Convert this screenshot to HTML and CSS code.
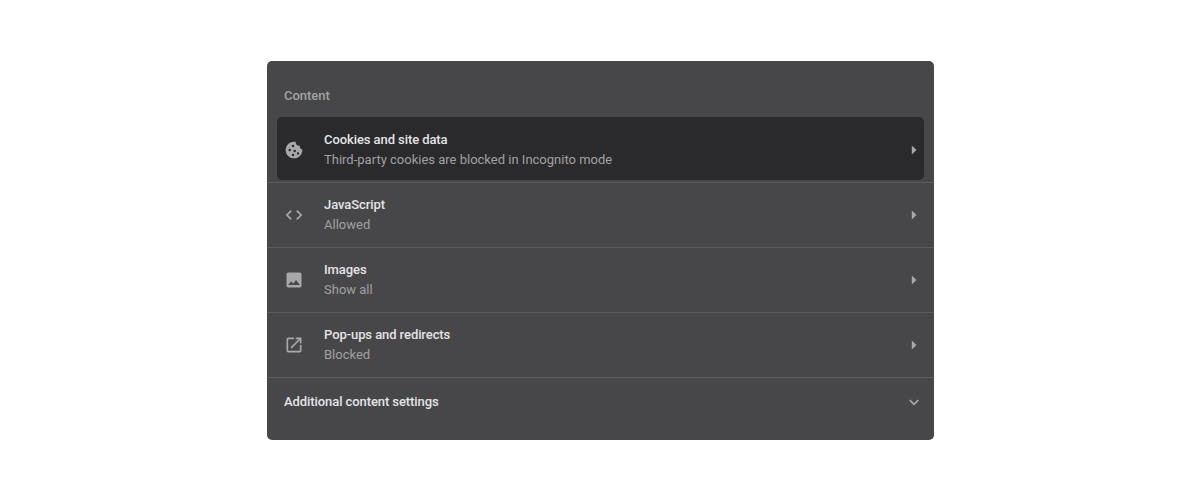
FILE: index.html
```html
<!DOCTYPE html>
<html lang="en">
<head>
<meta charset="utf-8">
<title>Content settings</title>
<link rel="stylesheet" href="styles.css">
</head>
<body>
<section class="card">
  <h2 class="heading">Content</h2>
  <div class="row-wrap">
    <div class="row row-active">
      <svg class="icon" viewBox="0 0 24 24"><path fill-rule="evenodd" d="M21.95 10.99c-1.79-.03-3.7-1.95-2.68-4.22-2.97 1-5.78-1.59-5.19-4.56C7.11.74 2 6.41 2 12c0 5.52 4.48 10 10 10 5.89 0 10.54-5.08 9.95-11.01zM10.800 5.800a1.500 1.500 0 1 1 0 3 1.500 1.500 0 0 1 0-3zM6.800 10.500a1.500 1.500 0 1 1 0 3 1.500 1.500 0 0 1 0-3zM12.800 11.700a1.500 1.500 0 1 1 0 3 1.500 1.500 0 0 1 0-3zM10.800 16.500a1.500 1.500 0 1 1 0 3 1.500 1.500 0 0 1 0-3zM16.800 14.700a1.400 1.400 0 1 1 0 2.800 1.400 1.400 0 0 1 0-2.800z"/></svg>
      <div class="text"><div class="title">Cookies and site data</div><div class="sub">Third-party cookies are blocked in Incognito mode</div></div>
      <svg class="arrow" viewBox="0 0 6 10"><path d="M0.8 0.500 5.500 5 0.800 9.500z"/></svg>
    </div>
  </div>
  <div class="row-wrap divided">
    <div class="row">
      <svg class="icon" viewBox="0 0 24 24"><path d="M9.400 16.600 4.800 12l4.600-4.600L8 6l-6 6 6 6 1.400-1.400zm5.200 0 4.600-4.600-4.600-4.600L16 6l6 6-6 6-1.400-1.400z"/></svg>
      <div class="text"><div class="title">JavaScript</div><div class="sub">Allowed</div></div>
      <svg class="arrow" viewBox="0 0 6 10"><path d="M0.800 0.500 5.500 5 0.800 9.500z"/></svg>
    </div>
  </div>
  <div class="row-wrap divided">
    <div class="row">
      <svg class="icon" viewBox="0 0 24 24"><path d="M21 19V5c0-1.100-.9-2-2-2H5c-1.100 0-2 .9-2 2v14c0 1.100.9 2 2 2h14c1.100 0 2-.9 2-2zM8.500 13.500l2.500 3.010L14.500 12l4.500 6H5l3.500-4.500z"/></svg>
      <div class="text"><div class="title">Images</div><div class="sub">Show all</div></div>
      <svg class="arrow" viewBox="0 0 6 10"><path d="M0.800 0.500 5.500 5 0.800 9.500z"/></svg>
    </div>
  </div>
  <div class="row-wrap divided">
    <div class="row">
      <svg class="icon" viewBox="0 0 24 24"><path d="M19 19H5V5h7V3H5a2 2 0 0 0-2 2v14a2 2 0 0 0 2 2h14c1.100 0 2-.9 2-2v-7h-2v7zM14 3v2h3.590l-9.830 9.830 1.410 1.410L19 6.410V10h2V3h-7z"/></svg>
      <div class="text"><div class="title">Pop-ups and redirects</div><div class="sub">Blocked</div></div>
      <svg class="arrow" viewBox="0 0 6 10"><path d="M0.800 0.500 5.500 5 0.800 9.500z"/></svg>
    </div>
  </div>
  <div class="more">
    <span class="title">Additional content settings</span>
    <svg class="chevron" viewBox="0 0 10 7"><path d="M0.800 1.200 5 5.400 9.200 1.200" fill="none" stroke-width="1.700"/></svg>
  </div>
</section>
</body>
</html>
```

FILE: styles.css
```css
html, body {
  margin: 0;
  height: 100%;
  background: #fff;
}
body {
  padding-top: 61px;
  box-sizing: border-box;
  font-family: Roboto, "Liberation Sans", sans-serif;
  font-size: 13px;
}
.card {
  box-sizing: border-box;
  width: 667px;
  height: 379px;
  margin-left: 267px;
  background: #474749;
  border-radius: 5px;
  display: flex;
  flex-direction: column;
}
.heading {
  box-sizing: border-box;
  margin: 0;
  padding: 27px 17px 0;
  height: 56px;
  line-height: 16px;
  font-size: 13px;
  font-weight: 500;
  letter-spacing: -0.02px;
  color: #a2a2a4;
}
.row-wrap { height: 65px; }
.divided {
  box-sizing: border-box;
  border-top: 1px solid #5b5b5d;
}
.row {
  box-sizing: border-box;
  height: 64px;
  display: flex;
  align-items: center;
  padding: 0 17px;
}
.row-active {
  height: 63px;
  margin: 0 10px;
  padding: 2px 7px 0;
  background: #2a2a2c;
  border-radius: 5px;
}
.icon {
  flex: none;
  width: 20px;
  height: 20px;
  fill: #a8a8aa;
  margin-right: 20px;
}
.text {
  flex: 1;
  display: flex;
  flex-direction: column;
  gap: 4px;
}
.title {
  line-height: 16px;
  font-weight: 500;
  letter-spacing: -0.08px;
  color: #e4e4e6;
}
.sub {
  line-height: 16px;
  color: #a0a0a2;
}
.arrow {
  flex: none;
  width: 6px;
  height: 10px;
  fill: #a8a8aa;
}
.more {
  flex: 1;
  border-top: 1px solid #5b5b5d;
  display: flex;
  align-items: flex-start;
  justify-content: space-between;
  padding: 16px 15px 0 17px;
}
.chevron {
  width: 10px;
  height: 7px;
  margin-top: 5px;
  stroke: #a8a8aa;
}
```
